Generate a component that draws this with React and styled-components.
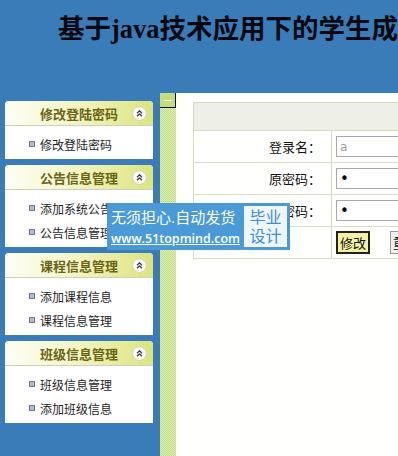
import React from 'react';
import styled, { createGlobalStyle } from 'styled-components';

const GlobalStyle = createGlobalStyle`
  html, body {
    margin: 0;
    padding: 0;
    background: #3a7cb7;
    font-family: "Liberation Sans", "Noto Sans CJK SC", sans-serif;
  }
`;

const Page = styled.div`
  min-height: 100vh;
  display: flex;
  flex-direction: column;
  position: relative;
  overflow: hidden;
`;

const Header = styled.header`
  height: 93px;
  flex-shrink: 0;
`;

const Title = styled.h1`
  margin: 0;
  padding: 7px 0 0 58px;
  font-family: "Liberation Serif", "Noto Sans CJK SC", serif;
  font-size: 26.5px;
  font-weight: bold;
  color: #080810;
  white-space: nowrap;
  overflow: hidden;
`;

const Body = styled.div`
  flex: 1;
  display: flex;
`;

const Sidebar = styled.aside`
  width: 148px;
  padding: 8px 7px 0 5px;
  display: flex;
  flex-direction: column;
  gap: 6px;
`;

const Panel = styled.section`
  background: #fff;
  border-radius: 4px 4px 0 0;
`;

const PanelHeader = styled.div`
  height: 24px;
  display: grid;
  grid-template-columns: 16px 1fr 16px;
  align-items: center;
  padding: 0 5px;
  border-bottom: 1px solid #cfcfb8;
  border-radius: 4px 4px 0 0;
  background: linear-gradient(to right, #fefef6 0%, #f4f5c8 45%, #dde47c 100%);
  font-size: 13px;
  font-weight: bold;
  color: #6a6616;
  text-align: center;
`;

const PanelTitle = styled.span`
  grid-column: 2;
`;

const Toggle = styled.svg`
  grid-column: 3;
  width: 15px;
  height: 15px;
`;

const ItemList = styled.ul`
  list-style: none;
  margin: 0;
  padding: 6px 0 3px 0;
`;

const Item = styled.li`
  height: 24px;
  display: flex;
  align-items: center;
  gap: 5px;
  padding-left: 24px;
  font-size: 12px;
  color: #1e1e1e;
  &::before {
    content: '';
    width: 4px;
    height: 4px;
    border: 1px solid #6c7590;
    background: #b4bcd2;
  }
`;

const Splitter = styled.div`
  width: 16px;
  background-color: #cfe59c;
  background-image: repeating-conic-gradient(#c4de8a 0 25%, #dcedb4 0 50%);
  background-size: 2px 2px;
`;

const SplitButton = styled.div`
  height: 14px;
  background: #c2dc7e;
  border-right: 1px solid #111;
  border-bottom: 1px solid #111;
  display: flex;
  align-items: center;
  justify-content: center;
  &::after {
    content: '';
    width: 8px;
    height: 1px;
    background: #f4f8e4;
  }
`;

const Content = styled.main`
  flex: 1;
  background: #fffffd;
  padding: 9px 0 0 17px;
  overflow: hidden;
`;

const FormTable = styled.table`
  border-collapse: collapse;
  width: 420px;
  font-size: 13px;
  color: #111;
  td {
    border: 1px solid #d9d9c4;
  }
`;

const HeadCell = styled.td`
  height: 25px;
  background: #eef0e8;
`;

const LabelCell = styled.td`
  width: 127px;
  height: 31px;
  text-align: right;
  padding: 0 10px 0 0;
`;

const FieldCell = styled.td`
  padding: 0 0 0 4px;
`;

const Input = styled.input`
  box-sizing: border-box;
  width: 160px;
  height: 21px;
  margin: 0;
  padding: 0 3px;
  border: 1px solid #a9a9a9;
  font-family: "DejaVu Sans", sans-serif;
  font-size: ${p => (p.type === 'password' ? '15px' : '12px')};
  color: ${p => (p.type === 'password' ? '#000' : '#999')};
  background: #fff;
  display: block;
`;

const Buttons = styled.div`
  display: flex;
  gap: 20px;
`;

const Button = styled.button`
  height: 23px;
  padding: 0 2px;
  font-family: inherit;
  font-size: 13px;
  color: #111;
  background: ${p => (p.$primary ? '#f2f2a2' : '#f0f0f0')};
  border: ${p => (p.$primary ? '2px solid #222' : '1px solid #9a9a9a')};
`;

const Watermark = styled.div`
  position: absolute;
  left: 107px;
  top: 203px;
  width: 183px;
  height: 47px;
  background: #4a9ad7;
  display: flex;
  align-items: center;
  box-sizing: border-box;
  padding: 0 3px 0 4px;
  gap: 4px;
`;

const MarkText = styled.div`
  flex: 1;
  color: #fff;
  display: flex;
  flex-direction: column;
  gap: 3px;
`;

const MarkSlogan = styled.div`
  font-size: 15px;
  font-weight: normal;
  white-space: nowrap;
`;

const MarkUrl = styled.div`
  font-family: "Open Sans", "Noto Sans", sans-serif;
  font-size: 12.5px;
  font-weight: 600;
  text-decoration: underline;
  white-space: nowrap;
`;

const MarkBadge = styled.div`
  width: 44px;
  height: 41px;
  background: #eef5fb;
  color: #3c8ed4;
  font-size: 16px;
  line-height: 19px;
  text-align: center;
  display: flex;
  flex-direction: column;
  justify-content: center;
`;

const menus = [
  { title: '修改登陆密码', items: ['修改登陆密码'] },
  { title: '公告信息管理', items: ['添加系统公告', '公告信息管理'] },
  { title: '课程信息管理', items: ['添加课程信息', '课程信息管理'] },
  { title: '班级信息管理', items: ['班级信息管理', '添加班级信息'] },
];

const fields = [
  { label: '登录名', type: 'text' },
  { label: '原密码', type: 'password' },
  { label: '新密码', type: 'password' },
];

function ToggleIcon() {
  return (
    <Toggle viewBox="0 0 15 15">
      <circle cx="7.5" cy="7.5" r="6.8" fill="#fff" stroke="#c9c9b2" strokeWidth="0.8" />
      <path d="M5 7.2 L7.5 4.8 L10 7.2 M5 10.2 L7.5 7.8 L10 10.2" fill="none" stroke="#333" strokeWidth="1.2" />
    </Toggle>
  );
}

export default function App() {
  return (
    <Page>
      <GlobalStyle />
      <Header>
        <Title>基于java技术应用下的学生成绩管理系统</Title>
      </Header>
      <Body>
        <Sidebar>
          {menus.map(m => (
            <Panel key={m.title}>
              <PanelHeader>
                <PanelTitle>{m.title}</PanelTitle>
                <ToggleIcon />
              </PanelHeader>
              <ItemList>
                {m.items.map(i => (
                  <Item key={i}>{i}</Item>
                ))}
              </ItemList>
            </Panel>
          ))}
        </Sidebar>
        <Splitter>
          <SplitButton />
        </Splitter>
        <Content>
          <FormTable>
            <tbody>
              <tr>
                <HeadCell colSpan={2} />
              </tr>
              {fields.map(f => (
                <tr key={f.label}>
                  <LabelCell>{f.label}：</LabelCell>
                  <FieldCell>
                    <Input type={f.type} defaultValue="a" readOnly />
                  </FieldCell>
                </tr>
              ))}
              <tr>
                <LabelCell />
                <FieldCell>
                  <Buttons>
                    <Button $primary>修改</Button>
                    <Button>重置</Button>
                  </Buttons>
                </FieldCell>
              </tr>
            </tbody>
          </FormTable>
        </Content>
      </Body>
      <Watermark>
        <MarkText>
          <MarkSlogan>无须担心.自动发货</MarkSlogan>
          <MarkUrl>www.51topmind.com</MarkUrl>
        </MarkText>
        <MarkBadge>
          <span>毕业</span>
          <span>设计</span>
        </MarkBadge>
      </Watermark>
    </Page>
  );
}
